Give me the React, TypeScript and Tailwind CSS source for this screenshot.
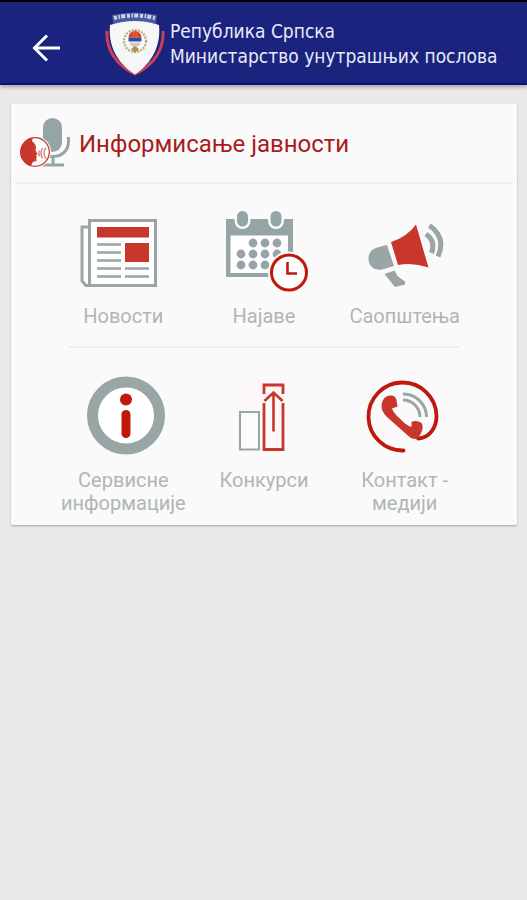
import type { ReactNode } from "react";

const GRAY = "#95a5a6";
const ASH = "#9aa5a5";
const RED = "#c9362c";
const DARK_RED = "#c0180c";
const PAPER = "#fafafa";

interface Tile {
  id: string;
  label: string;
  icon: ReactNode;
}

function BackIcon() {
  return (
    <svg className="h-8 w-8" viewBox="0 0 32 32" fill="none" stroke="#fff" strokeWidth="3" aria-hidden="true">
      <path d="M29 16H4M16 3.5L3.5 16 16 28.5" />
    </svg>
  );
}

function Crest() {
  return (
    <svg className="h-16 w-15 shrink-0" viewBox="0 0 60 64" aria-hidden="true">
      <path d="M2 19C1 36 10 53 30 62C50 53 59 36 58 19" fill="none" stroke="#c8405a" strokeWidth="3" />
      <path d="M7 3Q30-2 52 3L51 11H8Z" fill="#4a5a9c" />
      <path d="M9 6Q30 1 50 6" fill="none" stroke="#c9d2ec" strokeWidth="4" strokeDasharray="3 1.6 1.5 1.2 4 1.8" />
      <path d="M5 13Q30 5 54 13C56 34 47 51 30 62.500C12 51 3 34 5 13Z" fill="#f7f6f7" />
      {/* Wreath */}
      <circle cx="30" cy="29" r="11" fill="none" stroke="#b9ab80" strokeWidth="2.2" strokeDasharray="2 1.2" />
      <circle cx="30" cy="28" r="8" fill="#fff" />
      <path d="M23.500 25.500a6.500 6.500 0 0 1 13 0z" fill="#dd3b26" />
      <path d="M27 21L30 18.500 33 21V25H27Z" fill="#e2552c" />
      <path d="M23.500 25.500h13v4h-13z" fill="#2c4fa5" />
      <path d="M24 30.500h12q-1 4-6 5q-5-1-6-5z" fill="#d4c9c3" />
      <path d="M26 37l4-3 4 3-4 4z" fill="#b0924c" />
    </svg>
  );
}

function MicIcon() {
  return (
    <svg className="h-13 w-13 shrink-0" viewBox="0 0 52 52" aria-hidden="true">
      <rect x="24" y="2" width="19" height="34" rx="9.5" fill={GRAY} />
      <path d="M49.500 21v4.500c0 9-6.500 15-15.500 15s-12-3-14-8M34 40v9.500M24 49h21" fill="none" stroke={GRAY} strokeWidth="3" />
      <circle cx="16" cy="36" r="16" fill={PAPER} />
      <circle cx="16" cy="36" r="14.3" fill="#fff" stroke={RED} strokeWidth="1.3" />
      <path d="M14 22A14.300 14.300 0 0 0 12 50C13 48 13 46 15 45.500C18 45.500 18 44 17 42.500L18 41L17 39.500L18.500 38L16.500 34.500L17 31Q16 27 13 25Z" fill={RED} />
      <path d="M20.500 34.500q-1.500 3 0 6M23.500 32q-3 5 0 10.500M27 31.500q-4 5.500 0 11.500" fill="none" stroke="#e29089" strokeWidth="1.6" />
    </svg>
  );
}

function TileIcon({ children }: { children: ReactNode }) {
  return (
    <svg className="h-21 w-24" viewBox="0 0 96 84" fill="none" aria-hidden="true">
      {children}
    </svg>
  );
}

function NewsIcon() {
  return (
    <TileIcon>
      <path d="M14.500 18H7v54l4 4.500h4" fill="#fff" stroke={ASH} strokeWidth="3" />
      <rect x="14.5" y="11.500" width="66" height="65" fill="#fff" stroke={ASH} strokeWidth="3" />
      <path d="M22 18h52v10.500H22zM50 34h24v19H50z" fill={RED} />
      <path
        d="M22 35.500h24M22 43.500h24M22 51.500h24M22 59.500h24M22 67.500h24M50 59.500h24M50 67.500h24"
        stroke={ASH}
        strokeWidth="2.4"
      />
    </TileIcon>
  );
}

const CALENDAR_DOTS = [
  [37, 34], [49, 34], [61, 34],
  [25, 45], [37, 45], [49, 45], [61, 45],
  [25, 56], [37, 56], [49, 56],
];

function CalendarIcon() {
  return (
    <TileIcon>
      <path d="M10 10h67v58H10z" fill={GRAY} />
      <path d="M14.500 26.500H72V64H14.500z" fill="#fff" />
      {[26.5, 60].map((x) => (
        <rect key={x} x={x - 5.5} y="2" width="11" height="15.500" rx="5.5" fill={GRAY} stroke={PAPER} strokeWidth="5" paintOrder="stroke" />
      ))}
      {CALENDAR_DOTS.map(([x, y]) => (
        <circle key={`${x}-${y}`} cx={x} cy={y} r="4.4" fill={GRAY} />
      ))}
      <circle cx="73" cy="63.500" r="21" fill={PAPER} />
      <circle cx="73" cy="63.500" r="17.500" fill="#fff" stroke={DARK_RED} strokeWidth="3" />
      <path d="M71.500 53v11.500H81" stroke={DARK_RED} strokeWidth="2.600" />
    </TileIcon>
  );
}

function MegaphoneIcon() {
  return (
    <TileIcon>
      <path d="M34 33Q50 28 59 15.500L71.500 58.500Q56 53 41 56Z" fill={RED} />
      <path d="M30 36L37 57L25 60.500C18 62 12 57.500 11.500 51C11 44.500 14 40.500 20 38.500Z" fill={ASH} />
      <path d="M27.500 65L37.500 61.500L40.500 67L48 72.500V75.500L38 78Z" fill={ASH} />
      <path d="M69 25q10 7 5.500 19" stroke={ASH} strokeWidth="5" />
      <path d="M72.500 16.500q17 12 8.500 31" stroke={ASH} strokeWidth="5" />
    </TileIcon>
  );
}

function InfoIcon() {
  return (
    <TileIcon>
      <circle cx="51" cy="42.500" r="33.500" fill="#fff" stroke={ASH} strokeWidth="11" />
      <circle cx="51" cy="26.500" r="6" fill={DARK_RED} />
      <path d="M51 41.500v19" stroke={DARK_RED} strokeWidth="9" strokeLinecap="round" />
    </TileIcon>
  );
}

function ChartIcon() {
  return (
    <TileIcon>
      <path d="M21 5h46v73H21z" fill="#fdf8f8" />
      <rect x="24" y="39" width="19" height="37.500" fill="#fbfbfb" stroke={ASH} strokeWidth="2" />
      <path d="M48 21V12h19v9M48 30v46.500h19V30" stroke={RED} strokeWidth="2.800" />
      <path d="M57.500 58.500V19.500M48.500 28l9-8.500 9 8.500" stroke={RED} strokeWidth="2.600" />
    </TileIcon>
  );
}

function PhoneIcon() {
  return (
    <TileIcon>
      <path
        d="M46.500 77.500A34 34 0 1 1 79.500 43C79.500 54 73 65 61 65.500"
        stroke={DARK_RED}
        strokeWidth="3.800"
        strokeLinecap="round"
      />
      <path
        d="M24.500 34C24.500 27 28 23 33 22.500Q38.500 22 39.500 27L40.500 33.500L35 35.500Q36 39 40 43L48 50.500Q52 53.500 54.500 54L54.500 49Q60 46.500 65 50.500Q67 56 63 62Q59 69 52.500 64L30 44Q25 39 24.500 34Z"
        fill={RED}
      />
      <path d="M46 21A23 23 0 0 1 69.500 44M46 27A17 17 0 0 1 63 44" stroke={ASH} strokeWidth="3" />
    </TileIcon>
  );
}

const TOP_TILES: Tile[] = [
  { id: "news", label: "Новости", icon: <NewsIcon /> },
  { id: "events", label: "Најаве", icon: <CalendarIcon /> },
  { id: "statements", label: "Саопштења", icon: <MegaphoneIcon /> },
];

const BOTTOM_TILES: Tile[] = [
  { id: "service", label: "Сервисне информације", icon: <InfoIcon /> },
  { id: "contests", label: "Конкурси", icon: <ChartIcon /> },
  { id: "contact", label: "Контакт - медији", icon: <PhoneIcon /> },
];

function TileRow({ tiles }: { tiles: Tile[] }) {
  return (
    <div className="grid grid-cols-3 items-start">
      {tiles.map((tile) => (
        <button key={tile.id} type="button" className="flex flex-col items-center gap-3">
          {tile.icon}
          <span className="max-w-33 text-center text-[20px] leading-[23px] text-[#b0b6b6]">{tile.label}</span>
        </button>
      ))}
    </div>
  );
}

export default function App() {
  return (
    <div className="min-h-screen bg-[#e9e9e9] font-[Roboto,sans-serif]">
      <header className="flex items-center border-t-2 border-b-2 border-t-black border-b-[#10107a] bg-[#1a237e] pt-[10px] pb-[7px] pr-4 pl-[31px] shadow-[0_2px_4px_rgba(0,0,0,0.3)]">
        <button type="button" aria-label="Назад" className="mt-2 mr-[42px]">
          <BackIcon />
        </button>
        <Crest />
        <h1 className="ml-[5px] font-['DejaVu_Sans_Condensed','DejaVu_Sans',sans-serif] text-[19px] leading-[25px] whitespace-nowrap text-[#e8eaf8]">
          Република Српска
          <br />
          Министарство унутрашњих послова
        </h1>
      </header>

      <main className="pt-[19px] pr-[10px] pl-[11px]">
        <section className="rounded-xs bg-[#fafafa] px-1 pb-[10px] shadow-[0_1px_2px_rgba(0,0,0,0.3)]">
          <div className="flex items-center gap-2 border-b-2 border-[#efefef] px-1 pt-3 pb-[14px]">
            <MicIcon />
            <h2 className="pt-1 text-[24px] leading-8 text-[#a81c1c]">Информисање јавности</h2>
          </div>

          <div className="pt-[25px] pr-[38px] pl-[38px]">
            <TileRow tiles={TOP_TILES} />
            <hr className="mx-4 mt-[18px] mb-[25px] border-t-2 border-[#efefef]" />
            <TileRow tiles={BOTTOM_TILES} />
          </div>
        </section>
      </main>
    </div>
  );
}
